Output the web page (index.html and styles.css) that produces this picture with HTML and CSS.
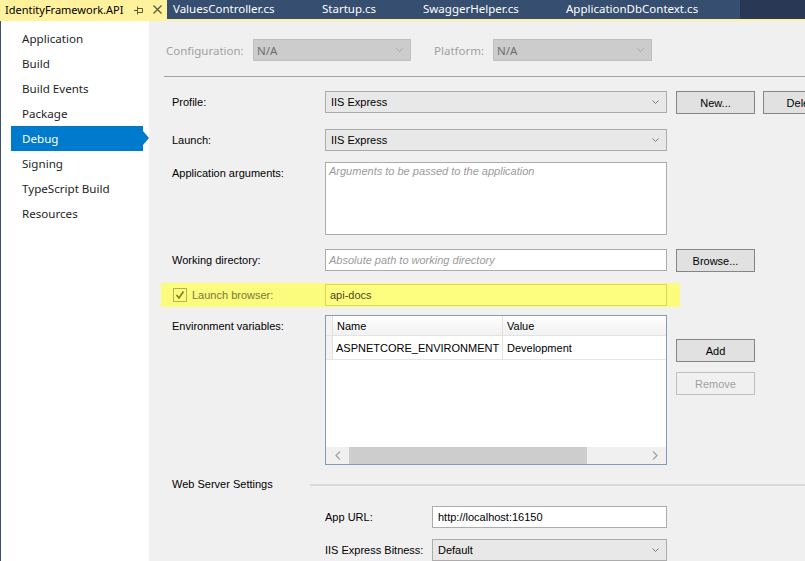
FILE: index.html
```html
<!DOCTYPE html>
<html>
<head>
<meta charset="utf-8">
<title>IdentityFramework.API</title>
<link rel="stylesheet" href="styles.css">
</head>
<body>
<div class="window">
  <div class="tabbar">
    <div class="tab tab-active">
      <span class="tab-title">IdentityFramework.API</span>
      <svg class="tab-pin" width="10" height="10" viewBox="0 0 10 10"><path d="M0 5.5H3M3.5 1.5V9.5M3.5 3.5H8.5V7.5H3.5" fill="none" stroke="#5b5a3f" stroke-width="1"/></svg>
      <svg class="tab-close" width="9" height="9" viewBox="0 0 9 9"><path d="M0.5 0.5L8.5 8.5M8.5 0.5L0.5 8.5" fill="none" stroke="#5b5a3f" stroke-width="1.3"/></svg>
    </div>
    <div class="tab tab-values">ValuesController.cs</div>
    <div class="tab tab-startup">Startup.cs</div>
    <div class="tab tab-swagger">SwaggerHelper.cs</div>
    <div class="tab tab-dbcontext">ApplicationDbContext.cs</div>
    <div class="tab-fill"></div>
  </div>

  <div class="main">
    <nav class="sidebar">
      <div class="nav-item">Application</div>
      <div class="nav-item">Build</div>
      <div class="nav-item">Build Events</div>
      <div class="nav-item">Package</div>
      <div class="nav-item nav-active">Debug</div>
      <div class="nav-item">Signing</div>
      <div class="nav-item">TypeScript Build</div>
      <div class="nav-item">Resources</div>
    </nav>

    <section class="content">
      <div class="config-row">
        <span class="cfg-label cfg-label-config">Configuration:</span>
        <div class="combo combo-disabled combo-config"><span>N/A</span><svg class="chev" width="7" height="4" viewBox="0 0 7 4"><path d="M0.5 0.5L3.5 3.5L6.5 0.5" fill="none" stroke="#a6a6a6"/></svg></div>
        <span class="cfg-label cfg-label-platform">Platform:</span>
        <div class="combo combo-disabled combo-platform"><span>N/A</span><svg class="chev" width="7" height="4" viewBox="0 0 7 4"><path d="M0.5 0.5L3.5 3.5L6.5 0.5" fill="none" stroke="#a6a6a6"/></svg></div>
      </div>
      <div class="separator"></div>

      <div class="form">
        <div class="row row-profile">
          <div class="label">Profile:</div>
          <div class="combo combo-wide"><span>IIS Express</span><svg class="chev" width="7" height="4" viewBox="0 0 7 4"><path d="M0.5 0.5L3.5 3.5L6.5 0.5" fill="none" stroke="#7a7a7a"/></svg></div>
          <div class="btn">New...</div>
          <div class="btn btn-next">Delete</div>
        </div>

        <div class="row row-launch">
          <div class="label">Launch:</div>
          <div class="combo combo-wide"><span>IIS Express</span><svg class="chev" width="7" height="4" viewBox="0 0 7 4"><path d="M0.5 0.5L3.5 3.5L6.5 0.5" fill="none" stroke="#7a7a7a"/></svg></div>
        </div>

        <div class="row row-args">
          <div class="label">Application arguments:</div>
          <div class="textarea"><span class="placeholder">Arguments to be passed to the application</span></div>
        </div>

        <div class="row row-workdir">
          <div class="label">Working directory:</div>
          <div class="input input-wide"><span class="placeholder">Absolute path to working directory</span></div>
          <div class="btn">Browse...</div>
        </div>

        <div class="row row-browser">
          <div class="highlight">
            <div class="check-wrap">
              <span class="checkbox"><svg width="12" height="12" viewBox="0 0 12 12"><path d="M2.5 6L5 9L9.5 2.5" fill="none" stroke="#7b7b28" stroke-width="1.6"/></svg></span>
              <span class="check-label">Launch browser:</span>
            </div>
            <div class="input input-wide input-highlight">api-docs</div>
          </div>
        </div>

        <div class="row row-env">
          <div class="label">Environment variables:</div>
          <div class="grid">
            <div class="grid-row grid-head">
              <div class="cell cell-rowhead"></div>
              <div class="cell cell-name">Name</div>
              <div class="cell cell-value">Value</div>
            </div>
            <div class="grid-row grid-data">
              <div class="cell cell-rowhead"></div>
              <div class="cell cell-name">ASPNETCORE_ENVIRONMENT</div>
              <div class="cell cell-value">Development</div>
            </div>
            <div class="grid-space"></div>
            <div class="hscroll">
              <div class="hs-btn"><svg width="6" height="9" viewBox="0 0 6 9"><path d="M5 0.5L1 4.5L5 8.5" fill="none" stroke="#a0a0a0" stroke-width="1.2"/></svg></div>
              <div class="hs-thumb"></div>
              <div class="hs-track"></div>
              <div class="hs-btn"><svg width="6" height="9" viewBox="0 0 6 9"><path d="M1 0.5L5 4.5L1 8.5" fill="none" stroke="#a0a0a0" stroke-width="1.2"/></svg></div>
            </div>
          </div>
          <div class="env-buttons">
            <div class="btn">Add</div>
            <div class="btn btn-disabled">Remove</div>
          </div>
        </div>

        <div class="row row-webserver">
          <div class="ws-title">Web Server Settings</div>
          <div class="ws-line"></div>
        </div>

        <div class="row row-appurl">
          <div class="sub-label">App URL:</div>
          <div class="input input-short">http://localhost:16150</div>
        </div>

        <div class="row row-bitness">
          <div class="sub-label">IIS Express Bitness:</div>
          <div class="combo combo-short"><span>Default</span><svg class="chev" width="7" height="4" viewBox="0 0 7 4"><path d="M0.5 0.5L3.5 3.5L6.5 0.5" fill="none" stroke="#7a7a7a"/></svg></div>
        </div>
      </div>
    </section>
  </div>
</div>
</body>
</html>
```

FILE: styles.css
```css
* { box-sizing: border-box; }
html, body { margin: 0; padding: 0; }
body {
  width: 805px;
  height: 561px;
  overflow: hidden;
  background: #f0f0f0;
  font-family: "Liberation Sans", Arial, sans-serif;
  font-size: 11px;
  color: #000;
}
.window { display: flex; flex-direction: column; width: 805px; height: 561px; }

/* tab bar */
.tabbar {
  flex: none;
  display: flex;
  height: 21px;
  background: #293955;
  border-bottom: 2px solid #fff29d;
  font-family: "Noto Sans", sans-serif;
  font-size: 11.5px;
}
.tab {
  flex: none;
  height: 19px;
  line-height: 18px;
  padding-left: 6px;
  white-space: nowrap;
  color: #fff;
  background: #364e6f;
}
.tab-active {
  width: 167px;
  padding-left: 5px;
  display: flex;
  align-items: center;
  background: #fff29d;
  color: #000;
}
.tab-title { line-height: 18px; font-size: 11px; }
.tab-pin { margin-left: 11px; }
.tab-close { margin-left: 9px; }
.tab-values { width: 149px; }
.tab-startup { width: 101px; }
.tab-swagger { width: 143px; }
.tab-dbcontext { width: 180px; }
.tab-fill { flex: 1; }

/* main */
.main { flex: 1; display: flex; min-height: 0; }
.sidebar {
  flex: none;
  width: 149px;
  background: #fff;
  border-left: 1px solid #3b5072;
  padding-top: 5px;
  font-family: "Noto Sans", sans-serif;
  font-size: 11.6px;
  color: #1e1e1e;
}
.nav-item {
  position: relative;
  margin-left: 10px;
  width: 132px;
  height: 25px;
  line-height: 25px;
  padding-left: 11px;
  white-space: nowrap;
}
.nav-active { background: #007acc; color: #fff; }
.nav-active::after {
  content: "";
  position: absolute;
  right: -6px;
  top: 5px;
  border-left: 6px solid #007acc;
  border-top: 7px solid transparent;
  border-bottom: 7px solid transparent;
}

.content { flex: 1; min-width: 0; overflow: hidden; }

/* configuration row */
.config-row {
  display: flex;
  align-items: center;
  margin: 18px 0 0 17px;
  height: 22px;
  font-family: "Noto Sans", sans-serif;
  font-size: 11.5px;
}
.cfg-label { flex: none; color: #a0a0a0; }
.cfg-label-config { width: 87px; }
.cfg-label-platform { width: 59px; margin-left: 23px; }
.combo {
  flex: none;
  display: flex;
  align-items: center;
  justify-content: space-between;
  height: 22px;
  padding: 0 7px 0 5px;
  background: #e8e8e8;
  border: 1px solid #acacac;
  white-space: nowrap;
}
.combo-disabled {
  background: #cccccc;
  border-color: #bfbfbf;
  color: #6d6d6d;
  padding-left: 3px;
}
.combo-config { width: 158px; }
.combo-platform { width: 159px; }
.chev { flex: none; }

.separator { height: 1px; background: #a0a0a0; margin: 15px 0 0 15px; }

/* form */
.form { padding-left: 23px; margin-top: 14px; }
.row { display: flex; align-items: flex-start; }
.row > * { flex: none; }
.label { width: 153px; line-height: 22px; white-space: nowrap; }
.combo-wide { width: 342px; }
.btn {
  width: 79px;
  height: 23px;
  margin-left: 9px;
  display: flex;
  align-items: center;
  justify-content: center;
  background: #e1e1e1;
  border: 1px solid #858585;
  white-space: nowrap;
}
.btn-next { margin-left: 8px; }
.btn-disabled { background: #f0f0f0; border-color: #bfbfbf; color: #a0a0a0; }

.row-launch { margin-top: 15px; }
.row-args { margin-top: 11px; }
.textarea {
  width: 342px;
  height: 73px;
  background: #fff;
  border: 1px solid #acacac;
  padding: 2px 3px;
}
.placeholder { font-style: italic; color: #9b9b9b; }
.row-workdir { margin-top: 14px; }
.input {
  height: 22px;
  line-height: 20px;
  background: #fff;
  border: 1px solid #acacac;
  padding-left: 3px;
  white-space: nowrap;
}
.input-wide { width: 342px; }

.row-browser { margin-top: 11px; }
.highlight {
  display: flex;
  align-items: center;
  margin-left: -11px;
  width: 519px;
  height: 24px;
  background: #fbfb7e;
}
.check-wrap { width: 164px; display: flex; align-items: center; padding-left: 12px; }
.checkbox {
  width: 14px;
  height: 14px;
  border: 1px solid #b4b456;
  display: flex;
  align-items: center;
  justify-content: center;
}
.check-label { margin-left: 5px; color: #78783a; }
.input-highlight {
  background: #fdfd80;
  border-color: #d7d765;
  padding-left: 4px;
  color: #4a4a20;
}

/* environment grid */
.row-env { margin-top: 8px; }
.grid {
  width: 342px;
  height: 150px;
  background: #fff;
  border: 1px solid #7f9db9;
  display: flex;
  flex-direction: column;
}
.grid-row { display: flex; flex: none; }
.grid-head { height: 20px; background: linear-gradient(#ffffff, #f1f1f1); border-bottom: 1px solid #e3e3e3; }
.grid-data { height: 24px; border-bottom: 1px solid #e5e5e5; }
.cell { flex: none; display: flex; align-items: center; white-space: nowrap; overflow: hidden; }
.cell-rowhead { width: 7px; background: #f3f3f3; border-right: 1px solid #e0e0e0; }
.cell-name { width: 170px; padding-left: 3px; border-right: 1px solid #e0e0e0; }
.cell-value { flex: 1; padding-left: 4px; }
.grid-head .cell-name { padding-left: 4px; }
.grid-space { flex: 1; }
.hscroll { flex: none; height: 17px; display: flex; background: #f0f0f0; }
.hs-btn { width: 23px; display: flex; align-items: center; justify-content: center; }
.hs-thumb { width: 238px; background: #cdcdcd; }
.hs-track { flex: 1; }
.env-buttons { display: flex; flex-direction: column; gap: 10px; margin-top: 24px; }

/* web server */
.row-webserver { margin-top: 11px; align-items: center; height: 16px; }
.ws-title { width: 138px; white-space: nowrap; }
.ws-line { flex: 1 !important; height: 2px; background: #dadada; margin-top: 1px; }
.row-appurl { margin-top: 14px; }
.sub-label { width: 107px; margin-left: 153px; line-height: 22px; white-space: nowrap; }
.input-short { width: 235px; padding-left: 5px; }
.row-bitness { margin-top: 11px; }
.combo-short { width: 235px; }
```
